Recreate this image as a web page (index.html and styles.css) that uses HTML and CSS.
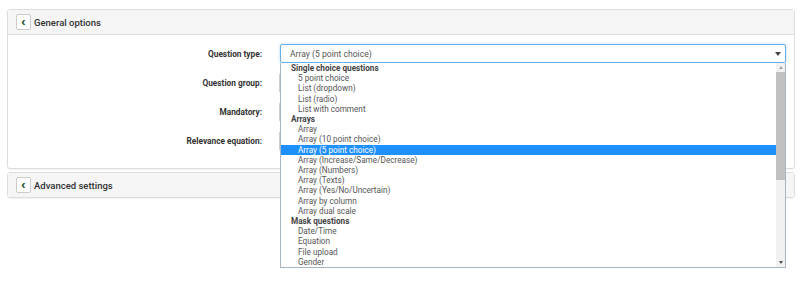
FILE: index.html
```html
<!DOCTYPE html>
<html lang="en">
<head>
  <meta charset="UTF-8" />
  <title>Question settings</title>
  <link rel="stylesheet" href="styles.css">
</head>
<body>
  <div class="panel">
    <div class="panel-heading">
      <button class="toggle">&#8249;</button>
      <span class="panel-title">General options</span>
    </div>
    <div class="panel-body">
      <div class="form-row">
        <label>Question type:</label>
        <div class="select-wrap">
          <div class="select open">
            <span>Array (5 point choice)</span>
            <span class="caret"></span>
          </div>
          <div class="dropdown">
            <ul class="options">
              <li class="group">Single choice questions</li>
              <li>5 point choice</li>
              <li>List (dropdown)</li>
              <li>List (radio)</li>
              <li>List with comment</li>
              <li class="group">Arrays</li>
              <li>Array</li>
              <li>Array (10 point choice)</li>
              <li class="selected">Array (5 point choice)</li>
              <li>Array (Increase/Same/Decrease)</li>
              <li>Array (Numbers)</li>
              <li>Array (Texts)</li>
              <li>Array (Yes/No/Uncertain)</li>
              <li>Array by column</li>
              <li>Array dual scale</li>
              <li class="group">Mask questions</li>
              <li>Date/Time</li>
              <li>Equation</li>
              <li>File upload</li>
              <li>Gender</li>
            </ul>
            <div class="scrollbar">
              <span class="arrow up"></span>
              <div class="track"><div class="thumb"></div></div>
              <span class="arrow down"></span>
            </div>
          </div>
        </div>
      </div>
      <div class="form-row">
        <label>Question group:</label>
        <div class="input"></div>
      </div>
      <div class="form-row">
        <label>Mandatory:</label>
        <div class="input"></div>
      </div>
      <div class="form-row">
        <label>Relevance equation:</label>
        <div class="input"></div>
      </div>
    </div>
  </div>

  <div class="panel">
    <div class="panel-heading">
      <button class="toggle">&#8249;</button>
      <span class="panel-title">Advanced settings</span>
    </div>
  </div>
</body>
</html>
```

FILE: styles.css
```css
html, body {
  height: 100%;
}
body {
  font-family: Roboto, "Liberation Sans", sans-serif;
  margin: 0;
  padding: 9px 5px 0 7px;
  box-sizing: border-box;
  background: #fff;
  color: #333;
}
.panel {
  border: 1px solid #ddd;
  border-radius: 3px;
  margin-bottom: 3px;
  box-shadow: 0 1px 1px rgba(0, 0, 0, 0.05);
}
.panel-heading {
  display: flex;
  align-items: center;
  gap: 3px;
  height: 24px;
  padding: 0 8px;
  background: #f5f5f5;
}
.panel-body {
  border-top: 1px solid #ddd;
  padding: 9px 8px 18px 0;
}
.toggle {
  width: 15px;
  height: 16px;
  padding: 0;
  border: 1px solid #ccc;
  border-radius: 2px;
  background: #fff;
  color: #1d4d2b;
  font-size: 13px;
  font-weight: bold;
  line-height: 12px;
}
.panel-title {
  font-size: 9.5px;
  font-weight: 500;
  color: #333;
}
.form-row {
  display: grid;
  grid-template-columns: 254px 1fr;
  column-gap: 18px;
  align-items: center;
  height: 19px;
  margin-bottom: 10px;
}
.form-row:last-child {
  margin-bottom: 0;
}
label {
  text-align: right;
  font-size: 8.3px;
  font-weight: bold;
}
.input {
  height: 18px;
  margin-left: -1px;
  border: 1px solid #ccc;
  border-radius: 2px;
}
.select-wrap {
  position: relative;
}
.select {
  display: flex;
  align-items: center;
  justify-content: space-between;
  height: 17px;
  padding: 0 4px 0 9px;
  border: 1px solid #66afe9;
  border-radius: 2px;
  box-shadow: 0 0 3px rgba(102, 175, 233, 0.5);
  font-size: 8.6px;
  color: #555;
}
.caret {
  width: 0;
  height: 0;
  border-left: 3px solid transparent;
  border-right: 3px solid transparent;
  border-top: 4px solid #444;
}
.dropdown {
  position: absolute;
  top: 19px;
  left: 0;
  right: 0;
  height: 204px;
  display: flex;
  background: #fff;
  border: 1px solid #a9b4c4;
  border-top: none;
  z-index: 2;
}
.options {
  flex: 1;
  list-style: none;
  margin: 0;
  padding: 0;
  font-size: 8.2px;
  line-height: 10.2px;
  color: #555;
}
.options li {
  padding-left: 17px;
}
.options li.group {
  padding-left: 10px;
  font-weight: bold;
  color: #444;
}
.options li.selected {
  background: #1e90ff;
  color: #fff;
}
.scrollbar {
  width: 9px;
  display: flex;
  flex-direction: column;
  background: #f1f1f1;
}
.arrow {
  height: 9px;
  display: flex;
  align-items: center;
  justify-content: center;
}
.arrow::after {
  content: "";
  border-left: 2.5px solid transparent;
  border-right: 2.5px solid transparent;
}
.arrow.up::after {
  border-bottom: 3px solid #a3a3a3;
}
.arrow.down::after {
  border-top: 3px solid #505050;
}
.track {
  flex: 1;
}
.thumb {
  height: 108px;
  background: #c1c1c1;
}
```
